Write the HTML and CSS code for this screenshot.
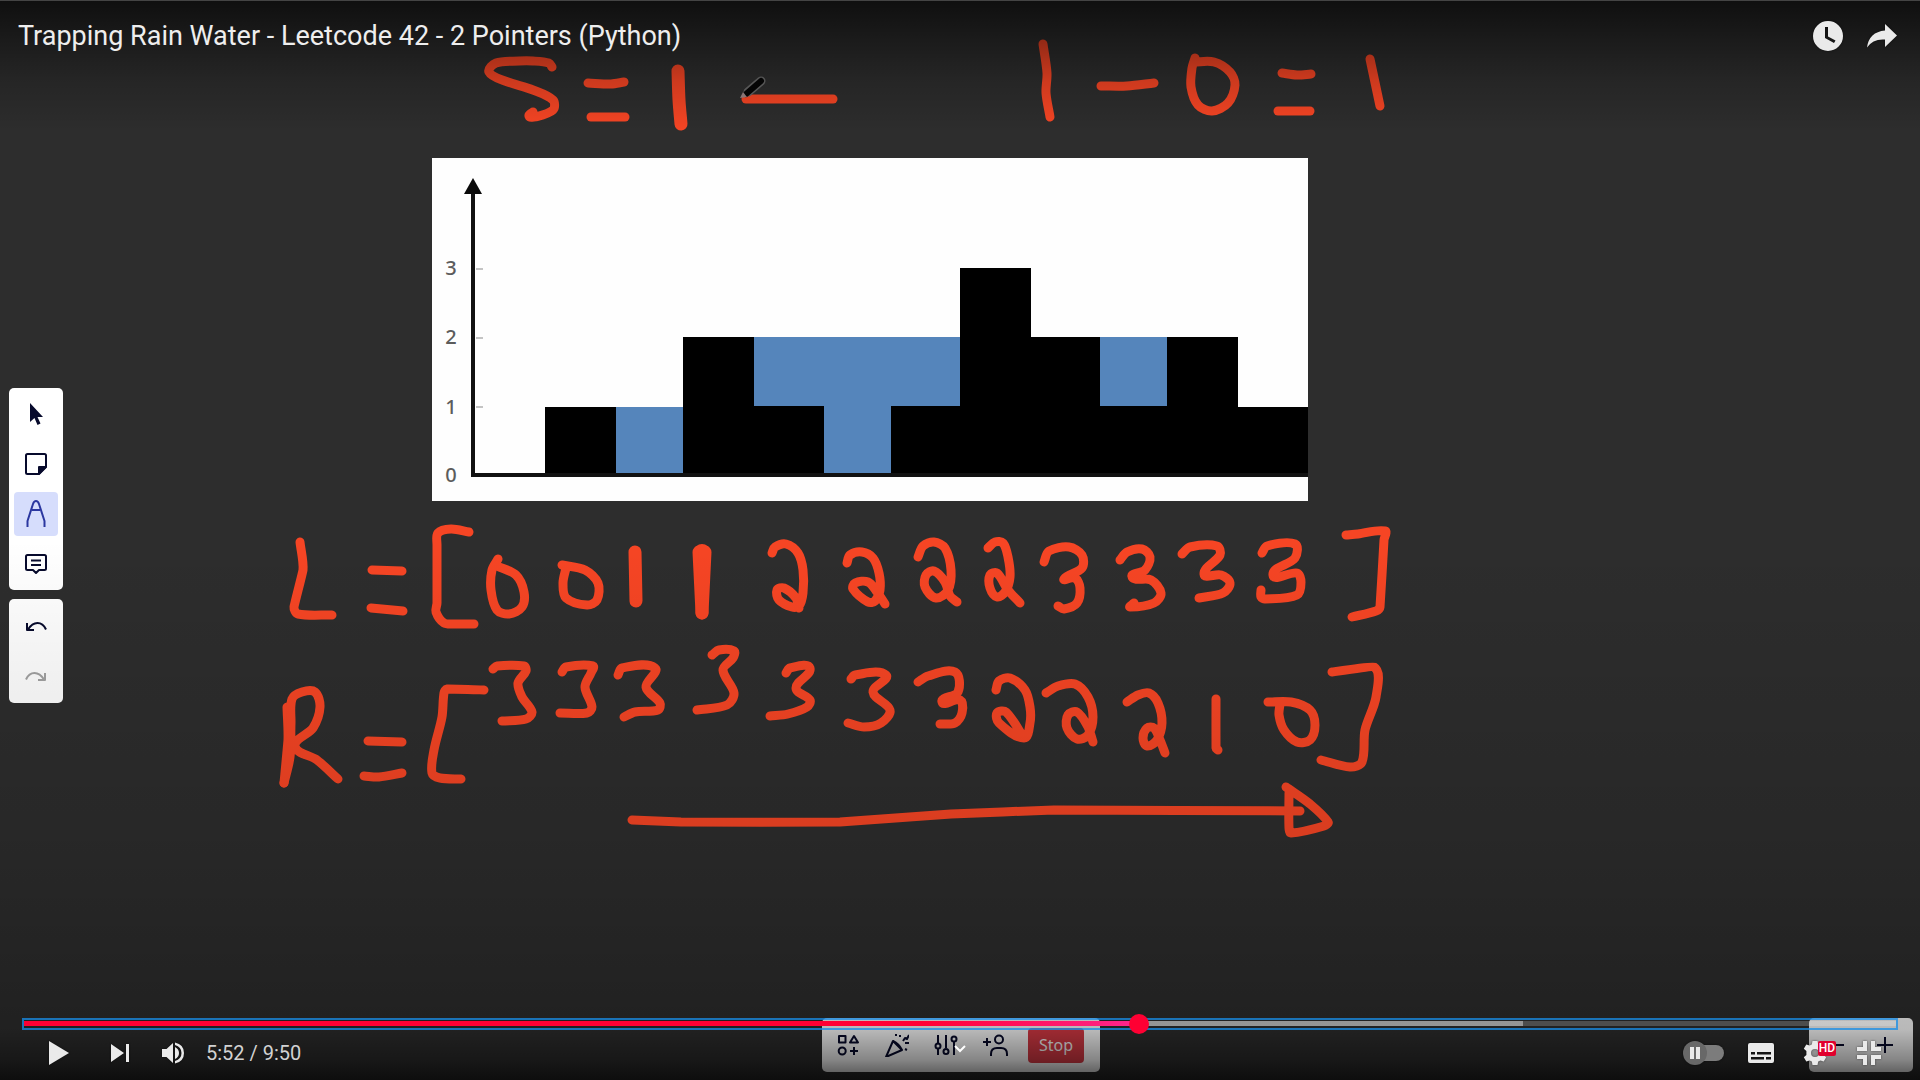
FILE: index.html
```html
<!DOCTYPE html>
<html lang="en">
<head>
<meta charset="utf-8">
<meta name="viewport" content="width=device-width, initial-scale=1">
<title>Trapping Rain Water - Leetcode 42 - 2 Pointers (Python)</title>
<link rel="stylesheet" href="styles.css">
</head>
<body>
<main class="player">
  <section class="board" aria-label="Whiteboard">
    <svg class="canvas" viewBox="0 0 1920 1080" role="img" aria-label="Elevation chart with the arrays L and R">
      <g class="chart">
        <rect class="paper" x="432" y="158" width="876" height="343"/>
        <g class="water">
          <rect x="615" y="407" width="69" height="68"/>
          <rect x="753" y="337" width="208" height="70"/>
          <rect x="823" y="406" width="69" height="69"/>
          <rect x="1100" y="337" width="68" height="70"/>
        </g>
        <path class="bars" d="M545 407h71v68h67V337h71v69h70v69h67v-69h69V268h71v69h69v69h67v-69h71v70h70v68H545z"/>
        <path class="axis" d="M473 190V475H1308"/>
        <path class="arrow" d="M473 178l9 16h-18z"/>
        <path class="ticks" d="M476 269h7M476 338h7M476 407h7"/>
        <g class="labels">
          <text x="451" y="275">3</text>
          <text x="451" y="344">2</text>
          <text x="451" y="414">1</text>
          <text x="451" y="482">0</text>
        </g>
      </g>
      <g class="ink" id="ink"></g>
      <g class="pen">
        <path class="pen-edge" d="M748 92L761 81"/>
        <path class="pen-body" d="M746 94L761 81"/>
        <path class="pen-tip" d="M740 98l3-6 4 5z"/>
      </g>
    </svg>

    <nav class="tools" aria-label="Drawing tools">
      <div class="panel tool-group">
        <button class="tool" aria-label="Select"><svg viewBox="0 0 24 24"><path class="solid" d="M6 1v19l4.500-4 3 7 3-1.500-3-6.500H19z"/></svg></button>
        <button class="tool" aria-label="Sticky note"><svg viewBox="0 0 24 24"><path d="M3.500 2h17q1.500 0 1.500 1.500V15l-7 7H3.500Q2 22 2 20.500v-17Q2 2 3.500 2z"/><path class="solid" d="M14 23v-8q0-1 1-1h8v1l-8 8z"/></svg></button>
        <button class="tool active" aria-label="Pen"><svg viewBox="0 0 24 28"><path d="M3.500 27v-6L9 4q1-3 3-3t3 3l5.500 17v6M8 10h8"/></svg></button>
        <button class="tool" aria-label="Comment"><svg viewBox="0 0 24 24"><path d="M3.500 3h17Q22 3 22 4.500v12q0 1.500-1.500 1.500H15l-3 3-3-3H3.500Q2 18 2 16.500v-12Q2 3 3.500 3zM7 8.500h10M7 13h10"/></svg></button>
      </div>
      <div class="panel tool-group history">
        <button class="tool" aria-label="Undo"><svg viewBox="0 0 24 24"><path d="M3 9v7h7M4 15.500Q8 9 13.500 9 19 9 22 15.500"/></svg></button>
        <button class="tool" aria-label="Redo" disabled><svg viewBox="0 0 24 24"><path d="M21 9v7h-7M20 15.500Q16 9 10.500 9 5 9 2 15.500"/></svg></button>
      </div>
    </nav>

    <div class="panel meeting-bar">
      <button class="tool" aria-label="Apps"><svg viewBox="0 0 24 24"><path d="M3 3h6.500v6.500H3zM18 3l4 6.500h-8zM18 14v8M14 18h8"/><circle cx="6.200" cy="18" r="3.500"/></svg></button>
      <button class="tool" aria-label="Reactions"><svg viewBox="0 0 24 24"><path d="M1 24L8 8l9 9zM8 8q6 3 9 9M15 4V2M18 8l2-3 2 1 2-4M20 10h4M11 3v-2M20 16l2 1"/></svg></button>
      <button class="tool" aria-label="Settings"><svg viewBox="0 0 24 24"><path d="M4 2v8M4 16v6M12 2v13M20 9v13"/><circle cx="4" cy="13" r="2.500"/><circle cx="12" cy="18.500" r="2.500"/><circle cx="20" cy="6" r="2.500"/></svg></button>
      <button class="tool wide-icon" aria-label="Invite"><svg viewBox="0 0 28 24"><path d="M2 9h8M6 5v8M10 23v-2q0-6 6-6h4q6 0 6 6v2"/><circle cx="18" cy="6.500" r="4"/></svg></button>
      <button class="stop">Stop</button>
    </div>

    <div class="panel zoom-bar">
      <button class="tool" aria-label="Zoom out"><svg viewBox="0 0 24 24"><path d="M5 12h16"/></svg></button>
      <button class="tool" aria-label="Zoom in"><svg viewBox="0 0 24 24"><path d="M4 12h16M12 4v16"/></svg></button>
    </div>
  </section>

  <div class="scrim"></div>

  <div class="chrome">
    <header class="top">
      <h1 class="title">Trapping Rain Water - Leetcode 42 - 2 Pointers (Python)</h1>
      <button class="ctl" aria-label="Watch later"><svg viewBox="0 0 36 36"><path fill-rule="evenodd" d="M18 3a15 15 0 1 0 0 30 15 15 0 0 0 0-30zm-3 6h3v9.500l7.500 4-1.500 2.500-9-5z"/></svg></button>
      <button class="ctl" aria-label="Share"><svg viewBox="0 0 36 36"><path d="M21 6l12 11.500L21 29v-7.500q-12-1-18 8Q5 14 21 12.500z"/></svg></button>
    </header>

    <footer class="bottom">
      <input class="seek" type="range" min="0" max="590" value="352" aria-label="Seek">
      <div class="controls">
        <button class="ctl play" aria-label="Play"><svg viewBox="0 0 36 36"><path d="M8 6l20 12L8 30z"/></svg></button>
        <button class="ctl next" aria-label="Next"><svg viewBox="0 0 36 36"><path d="M9 9l13 9-13 9zM24 9h3v18h-3z"/></svg></button>
        <button class="ctl" aria-label="Mute"><svg viewBox="0 0 36 36"><path d="M7 14h4.500L18 8v20l-6.500-6H7zM20 12q4 2 4 6t-4 6zM20 7.500q9 2 9 10.500t-9 10.500V26q6.500-2 6.500-8T20 10z"/></svg></button>
        <span class="time">5:52 / 9:50</span>
        <span class="spacer"></span>
        <label class="ctl autoplay">
          <input type="checkbox" aria-label="Autoplay">
          <svg viewBox="0 0 42 36"><rect class="track" x="13" y="10" width="28" height="16" rx="8"/><circle class="knob" cx="12" cy="18" r="12"/><path d="M7 12h4v12H7zM13 12h4v12h-4z"/></svg>
        </label>
        <button class="ctl" aria-label="Subtitles"><svg viewBox="0 0 36 36"><path fill-rule="evenodd" d="M7 8h22q2 0 2 2v16q0 2-2 2H7q-2 0-2-2V10q0-2 2-2zm1 9v2.500h4V17zm6 0v2.500h14V17zM8 22v2.500h13V22zm15 0v2.500h5V22z"/></svg></button>
        <button class="ctl settings" aria-label="Settings">
          <svg viewBox="0 0 36 36"><path fill-rule="evenodd" d="M15.500 6h5l.7 3.400 2.200 1.200 3.300-1.100 2.500 4.300-2.600 2.300v3.800l2.600 2.300-2.500 4.300-3.300-1.100-2.200 1.200-.7 3.400h-5l-.7-3.400-2.200-1.200-3.300 1.100-2.500-4.300 2.600-2.300v-3.800l-2.600-2.300 2.500-4.300 3.300 1.100 2.200-1.200zM18 14a4 4 0 1 0 0 8 4 4 0 0 0 0-8z"/></svg>
          <span class="hd">HD</span>
        </button>
        <button class="ctl" aria-label="Exit full screen"><svg viewBox="0 0 36 36"><path d="M12 6h4v10H6v-4h6zM20 6h4v6h6v4H20zM6 20h10v10h-4v-6H6zM20 20h10v4h-6v6h-4z"/></svg></button>
      </div>
      <button class="more" aria-label="More videos"><svg viewBox="0 0 14 10"><path d="M2 2l5 5 5-5"/></svg></button>
    </footer>
  </div>
</main>
<script src="ink.js"></script>
</body>
</html>
```
FILE: styles.css
```css
* { box-sizing: border-box; }
html, body { height: 100%; margin: 0; }
body { background: #000; overflow: hidden; }
button { margin: 0; padding: 0; border: 0; background: none; font: inherit; color: inherit; cursor: pointer; }

.player {
  position: relative;
  width: 100%;
  height: 100%;
  font-family: Roboto, "Liberation Sans", sans-serif;
  background: #2d2d2d;
}

/* whiteboard recording */
.board {
  position: absolute;
  inset: 0;
  display: grid;
  grid-template-columns: 1fr auto 1fr;
  grid-template-rows: 1fr auto;
  padding: 0 8px;
}
.board { padding-left: 9px; padding-right: 7px; }
.canvas { position: absolute; inset: 0; width: 100%; height: 100%; }
.paper { fill: #fefefe; }
.water { fill: #5585bb; }
.bars { fill: #000; }
.axis { fill: none; stroke: #111; stroke-width: 4; }
.arrow { fill: #0a0a0a; }
.ticks { stroke: #c4c4c4; stroke-width: 2; }
.labels { font: 500 20px "Noto Sans", sans-serif; fill: #5c5c5c; text-anchor: middle; }
.ink path { fill: none; stroke: #f64524; stroke-width: 9; stroke-linecap: round; stroke-linejoin: round; }
.ink .thick { stroke-width: 13; }
.ink .heavy { stroke-width: 16; }
.pen-edge { stroke: #666; stroke-width: 9; stroke-linecap: round; }
.pen-body { stroke: #050505; stroke-width: 6; stroke-linecap: round; }
.pen-tip { fill: #9a8484; }

.panel { position: relative; display: flex; background: #fff; border-radius: 5px; }
.tools {
  grid-column: 1 / -1;
  display: flex;
  flex-direction: column;
  justify-content: center;
  align-items: flex-start;
  gap: 9px;
  padding-top: 73px;
}
.tool-group { flex-direction: column; gap: 6px; padding: 4px 5px; }
.history { padding: 5px; }
.tool {
  display: grid;
  place-items: center;
  width: 44px;
  height: 44px;
  border-radius: 4px;
  color: #070a2c;
}
.tool svg { width: 24px; height: 24px; fill: none; stroke: currentColor; stroke-width: 2; stroke-linejoin: round; }
.tool .solid { fill: currentColor; stroke: none; }
.tool.active { background: #d6ddfc; color: #2b37a0; }
.tool.active svg { height: 28px; }
.tool:disabled { color: #a2a2a2; }

.meeting-bar {
  grid-column: 2;
  grid-row: 2;
  align-items: center;
  gap: 5px;
  height: 54px;
  margin-bottom: 8px;
  padding: 0 16px 0 4px;
}
.wide-icon svg { width: 28px; }
.stop {
  width: 56px;
  height: 35px;
  margin-left: 6px;
  border-radius: 4px;
  background: #d93a45;
  color: #fff;
  font: 16px "Noto Sans", sans-serif;
}
.zoom-bar {
  grid-column: 3;
  grid-row: 2;
  justify-self: end;
  align-items: center;
  margin-bottom: 8px;
  padding: 0 6px 0 4px;
  gap: 6px;
}

/* darkening above and below so that the controls stay readable */
.scrim {
  position: absolute;
  inset: 0;
  border-top: 1px solid #444;
  pointer-events: none;
  background:
    linear-gradient(rgba(0,0,0,.66), rgba(0,0,0,.4) 40px, rgba(0,0,0,.17) 80px, rgba(0,0,0,0) 130px),
    linear-gradient(to top, rgba(0,0,0,.7), rgba(0,0,0,.48) 20px, rgba(0,0,0,.28) 50px, rgba(0,0,0,.24) 90px, rgba(0,0,0,.12) 240px, rgba(0,0,0,0) 540px);
}

/* video player controls */
.chrome {
  position: relative;
  height: 100%;
  display: flex;
  flex-direction: column;
  justify-content: space-between;
  color: #eee;
}
.top { display: flex; align-items: center; height: 71px; padding: 0 11px 0 18px; }
.title { flex: 1; margin: 0; font-size: 27px; font-weight: 400; line-height: 36px; }
.ctl { position: relative; display: grid; place-items: center; flex: none; width: 54px; height: 54px; }
.ctl svg { width: 36px; height: 36px; fill: #eaeaea; filter: drop-shadow(0 0 1px rgba(0,0,0,.5)); }

.bottom { position: relative; padding: 0 22px 4px; }
.seek {
  -webkit-appearance: none;
  appearance: none;
  position: relative;
  z-index: 1;
  display: block;
  width: 100%;
  height: 12px;
  margin: 0;
  padding: 1px 0 2px;
  border: 2px solid rgba(25,142,231,.76);
  background: none;
}
.seek::-webkit-slider-runnable-track {
  height: 5px;
  background: linear-gradient(to right, #f03 0 48%, #ff2791 60%, rgba(255,255,255,.52) 60% 80.100%, rgba(255,255,255,.2) 80.100%);
}
.seek::-webkit-slider-thumb {
  -webkit-appearance: none;
  width: 20px;
  height: 20px;
  margin-top: -7px;
  border-radius: 50%;
  background: #f03;
}
.controls { display: flex; align-items: center; height: 46px; padding: 0 2px; }
.controls .ctl { height: 46px; }
.controls .play { width: 70px; }
.controls .next { width: 52px; }
.time { margin-left: 6px; font-size: 20px; line-height: 24px; color: #d2d2d2; }
.spacer { flex: 1; }
.controls .autoplay { width: 60px; }
.autoplay input { position: absolute; opacity: 0; }
.autoplay svg { width: 42px; }
.autoplay .track { fill: #7c7c7c; }
.autoplay .knob { fill: #686868; }
.hd {
  position: absolute;
  top: 11px;
  left: 30px;
  width: 18px;
  border-radius: 2px;
  background: #e1002d;
  color: #fff;
  font-size: 12px;
  font-weight: 500;
  line-height: 15px;
  text-align: center;
}
.more { position: absolute; left: 50%; bottom: 26px; width: 14px; height: 10px; margin-left: -7px; }
.more svg { display: block; width: 14px; height: 10px; fill: none; stroke: #fff; stroke-width: 2; }
```
FILE: ink.js
```js
// Freehand strokes: a list of points each, drawn as a smooth curve.
const strokes = [
  ["", "552,67 549,63 533,61 519,61 496,63 489,72 505,81 533,90 553,100 553,110 535,117 529,116 533,112"],
  ["", "588,83 611,84 624,82"],
  ["", "591,117 625,117"],
  ["thick", "678,71 679,100 681,124"],
  ["", "746,99 833,99"],
  ["", "1043,44 1047,73 1046,93 1050,117"],
  ["", "1101,86 1127,86 1154,83"],
  ["", "1195,58 1192,68 1191,87 1198,105 1212,111 1228,103 1235,85 1230,72 1214,62 1194,62"],
  ["", "1282,73 1297,75 1311,74"],
  ["", "1278,111 1310,111"],
  ["", "1370,59 1380,106"],

  ["", "300,542 303,570 294,607 298,614 332,615"],
  ["", "372,570 402,571"],
  ["", "371,608 403,611"],
  ["", "469,532 451,529 438,533 437,545 437,603 436,612 444,623 455,624 474,624"],
  ["", "498,559 492,570 491,590 497,610 509,614 522,607 524,592 516,575 497,566"],
  ["", "562,565 585,570 598,583 597,600 587,605 566,598 563,583 566,568"],
  ["thick", "635,552 636,601"],
  ["heavy", "702,552 702,575"],
  ["thick", "699,552 702,613"],
  ["thick", "705,552 702,613"],
  ["", "772,553 775,547 786,544 798,553 803,570 803,593 799,606 792,607 779,600 777,590 784,588 796,598 799,608"],
  ["", "847,563 850,555 862,552 873,558 879,573 880,590 875,601 868,602 853,589 855,583 868,582 877,592 885,604"],
  ["", "918,557 923,546 934,542 945,548 951,570 948,590 936,598 925,587 926,575 934,571 945,582 950,596 957,602"],
  ["", "988,548 995,542 1003,543 1008,557 1010,577 1005,592 997,597 990,588 990,575 997,573 1008,590 1020,603"],
  ["", "1044,562 1049,551 1069,547 1082,555 1082,568 1064,579 1075,578 1080,588 1077,603 1064,609 1058,606"],
  ["", "1120,560 1127,552 1142,549 1150,557 1145,570 1132,577 1151,580 1161,593 1154,603 1130,607 1134,603"],
  ["", "1182,554 1190,547 1217,546 1220,555 1204,574 1221,575 1230,583 1223,593 1199,598"],
  ["", "1262,553 1267,546 1295,544 1295,558 1273,575 1297,573 1301,582 1297,595 1265,599 1261,597 1261,590"],
  ["", "1346,535 1358,534 1385,531 1384,540 1380,607 1376,611 1352,617"],

  ["", "287,707 288,740 284,783"],
  ["", "284,783 290,757 291,723 292,699 302,692 315,692 320,707 313,728 295,746 317,760 338,779"],
  ["", "368,741 402,742"],
  ["", "364,776 379,777 402,773"],
  ["", "484,690 447,689 444,693 442,717 434,750 432,773 440,778 461,779"],
  ["", "493,669 497,666 524,666 526,671 518,683 522,697 532,712 526,719 502,721"],
  ["", "562,672 566,667 593,666 591,673 585,687 592,707 587,713 560,713"],
  ["", "618,675 622,668 655,668 646,687 660,703 658,710 635,712 624,717"],
  ["", "712,655 719,650 734,651 733,658 723,670 734,693 727,705 697,710"],
  ["", "786,673 790,668 810,668 796,688 810,700 807,707 788,714 770,716"],
  ["", "851,679 855,675 886,675 873,692 890,710 881,723 864,727 848,723"],
  ["", "918,682 928,676 955,672 958,692 942,702 960,700 962,713 955,723 940,724"],
  ["", "996,690 999,681 1010,678 1025,690 1030,707 1030,723 1024,738 999,723 997,713 1006,712 1024,738"],
  ["", "1046,693 1058,686 1075,684 1088,697 1093,717 1088,735 1077,739 1067,728 1068,715 1077,712 1088,727 1093,742"],
  ["", "1127,702 1138,695 1149,693 1158,703 1162,723 1157,740 1147,746 1143,738 1147,728 1154,728 1160,740 1165,753"],
  ["", "1216,699 1216,748 1218,750"],
  ["", "1268,702 1291,702 1310,710 1315,725 1310,740 1297,742 1284,730 1279,715 1280,704"],
  ["", "1332,672 1374,667 1376,697 1365,730 1362,762 1350,767 1321,760"],

  ["", "632,820 681,822 840,822 951,814 1054,810 1300,811"],
  ["", "1286,787 1310,804 1328,822 1324,826 1291,833 1289,828 1289,793"]
];

function smooth(points) {
  const p = points.split(" ").map(s => s.split(",").map(Number));
  let d = "M" + p[0].join(" ");
  for (let i = 0; i < p.length - 1; i++) {
    const a = p[i - 1] || p[i], b = p[i], c = p[i + 1], e = p[i + 2] || c;
    const len = Math.hypot(c[0] - b[0], c[1] - b[1]);
    const handle = (u, v) => {
      const n = Math.hypot(v[0] - u[0], v[1] - u[1]) || 1;
      return [(v[0] - u[0]) / n * len * 0.3, (v[1] - u[1]) / n * len * 0.3];
    };
    // long segments are kept straight
    const k = len > 35 ? 0.2 : 1;
    const h1 = handle(a, c), h2 = handle(b, e);
    d += `C${b[0] + h1[0] * k} ${b[1] + h1[1] * k} ${c[0] - h2[0] * k} ${c[1] - h2[1] * k} ${c[0]} ${c[1]}`;
  }
  return d;
}

const ink = document.getElementById("ink");
for (const [kind, points] of strokes) {
  const path = document.createElementNS("http://www.w3.org/2000/svg", "path");
  if (kind) path.setAttribute("class", kind);
  path.setAttribute("d", smooth(points));
  ink.append(path);
}
```
